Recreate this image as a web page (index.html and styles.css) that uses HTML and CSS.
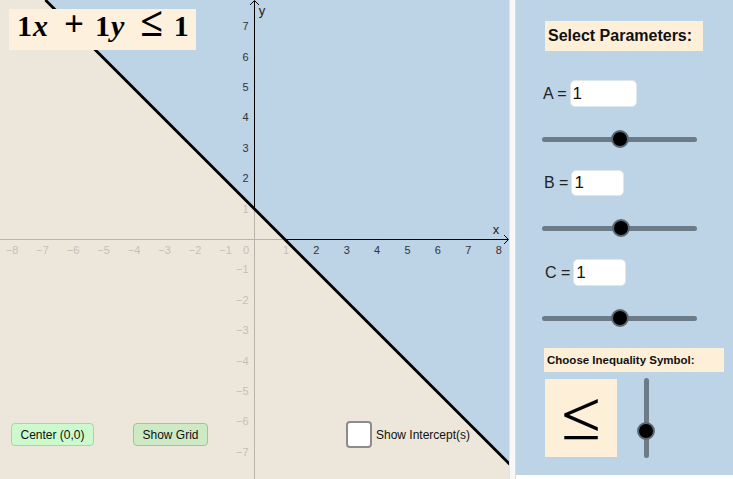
FILE: index.html
```html
<!DOCTYPE html>
<html>
<head>
<meta charset="utf-8">
<link rel="stylesheet" href="styles.css">
</head>
<body>
<div class="app">
  <div class="graph">
    <svg class="plot" width="509" height="479" viewBox="0 0 509 479" xmlns="http://www.w3.org/2000/svg">
      <polygon points="45.4,0 509,0 509,463.6" fill="#bcd4e6"/>
      <polygon class="beige" points="0,0 45.4,0 509,463.6 509,479 0,479"/>
      <g stroke="#000" stroke-width="1" fill="none">
        <line x1="0" y1="239.5" x2="508" y2="239.5"/>
        <line x1="254.5" y1="1" x2="254.5" y2="479"/>
        <polyline points="504,235 508.5,239.5 504,244"/>
        <polyline points="250,5 254.5,0.5 259,5"/>
      </g>
      <g class="lbl">
        <text x="12" y="254" text-anchor="middle">−8</text>
        <text x="42.5" y="254" text-anchor="middle">−7</text>
        <text x="73" y="254" text-anchor="middle">−6</text>
        <text x="103.5" y="254" text-anchor="middle">−5</text>
        <text x="134" y="254" text-anchor="middle">−4</text>
        <text x="164.5" y="254" text-anchor="middle">−3</text>
        <text x="195" y="254" text-anchor="middle">−2</text>
        <text x="225.5" y="254" text-anchor="middle">−1</text>
        <text x="246" y="254" text-anchor="middle">0</text>
        <text x="286" y="254" text-anchor="middle">1</text>
        <text x="316.3" y="254" text-anchor="middle">2</text>
        <text x="346.7" y="254" text-anchor="middle">3</text>
        <text x="377" y="254" text-anchor="middle">4</text>
        <text x="407.5" y="254" text-anchor="middle">5</text>
        <text x="437.9" y="254" text-anchor="middle">6</text>
        <text x="468.3" y="254" text-anchor="middle">7</text>
        <text x="498.7" y="254" text-anchor="middle">8</text>
        <text x="248.5" y="30.2" text-anchor="end">7</text>
        <text x="248.5" y="60.6" text-anchor="end">6</text>
        <text x="248.5" y="91" text-anchor="end">5</text>
        <text x="248.5" y="121.4" text-anchor="end">4</text>
        <text x="248.5" y="151.8" text-anchor="end">3</text>
        <text x="248.5" y="182.2" text-anchor="end">2</text>
        <text x="248.5" y="212.6" text-anchor="end">1</text>
        <text x="248.5" y="273.4" text-anchor="end">−1</text>
        <text x="248.5" y="303.8" text-anchor="end">−2</text>
        <text x="248.5" y="334.2" text-anchor="end">−3</text>
        <text x="248.5" y="364.6" text-anchor="end">−4</text>
        <text x="248.5" y="395" text-anchor="end">−5</text>
        <text x="248.5" y="425.4" text-anchor="end">−6</text>
        <text x="248.5" y="455.8" text-anchor="end">−7</text>
        <text class="axname" x="262" y="15" text-anchor="middle">y</text>
        <text class="axname" x="496" y="234" text-anchor="middle">x</text>
      </g>
      <polygon class="beige veil" points="0,0 45.4,0 509,463.6 509,479 0,479"/>
      <line x1="45.4" y1="0" x2="524.4" y2="479" stroke="#000" stroke-width="2.8"/>
    </svg>

    <div class="formula"><span class="num">1</span><span class="var">x</span><span class="op">+</span><span class="num n2">1</span><span class="var">y</span><span class="rel">≤</span><span class="num n3">1</span></div>

    <div class="controls">
      <button class="btn btn-center">Center (0,0)</button>
      <button class="btn btn-grid">Show Grid</button>
      <label class="check"><span class="box"></span><span class="check-text">Show Intercept(s)</span></label>
    </div>
  </div>

  <div class="divider"></div>

  <div class="panel">
    <div class="title">Select Parameters:</div>

    <div class="param param-a"><span class="plabel">A =</span><input class="field field-a" type="text" value="1"></div>
    <div class="hslider"><span class="knob" style="left:78px"></span></div>

    <div class="param param-b"><span class="plabel">B =</span><input class="field field-b" type="text" value="1"></div>
    <div class="hslider"><span class="knob" style="left:79px"></span></div>

    <div class="param param-c"><span class="plabel">C =</span><input class="field field-c" type="text" value="1"></div>
    <div class="hslider"><span class="knob" style="left:78px"></span></div>

    <div class="choose">Choose Inequality Symbol:</div>

    <div class="symbol-row">
      <div class="symbol"><span class="symbol-glyph">≤</span></div>
      <div class="vslider"><span class="vknob" style="top:44px"></span></div>
    </div>
  </div>
</div>
</body>
</html>
```

FILE: styles.css
```css
* { box-sizing: border-box; }
html, body { margin: 0; padding: 0; background: #fff; }
body { font-family: "Liberation Sans", Arial, sans-serif; color: #111; }

.app {
  display: flex;
  width: 733px;
  height: 479px;
  overflow: hidden;
}

.graph {
  position: relative;
  width: 509px;
  height: 479px;
  flex: none;
}
.plot { display: block; }
.beige { fill: #ede6da; }
.veil { fill-opacity: 0.78; }
.lbl text {
  font-family: "Liberation Sans", Arial, sans-serif;
  font-size: 11px;
  fill: #333;
}
.lbl .axname { font-size: 13px; fill: #222; }

.formula {
  position: absolute;
  left: 9px;
  top: 9px;
  width: 187px;
  height: 41px;
  background: #fdf0dc;
  padding-left: 8px;
  white-space: nowrap;
  font-family: "Liberation Serif", "Times New Roman", serif;
  font-weight: bold;
  font-size: 30px;
  line-height: 34px;
  color: #000;
}
.formula .var { font-style: italic; margin-left: 1px; }
.formula .op { margin-left: 16px; font-size: 35px; line-height: 0; }
.formula .n2 { margin-left: 11px; }
.formula .rel { margin-left: 16px; font-size: 41px; line-height: 0; }
.formula .n3 { margin-left: 11px; }

.controls {
  position: absolute;
  left: 11px;
  top: 421px;
  display: flex;
  align-items: center;
}
.btn {
  font-family: "Liberation Sans", Arial, sans-serif;
  font-size: 12px;
  color: #111;
  height: 23px;
  border-radius: 4px;
  padding: 0;
  margin: 0;
}
.btn-center {
  width: 83px;
  background: #ccfacc;
  border: 1px solid #a6d6a4;
}
.btn-grid {
  width: 75px;
  margin-left: 39px;
  background: #cdeac5;
  border: 1px solid #9fc499;
}
.check {
  display: flex;
  align-items: center;
  margin-left: 138px;
  font-size: 12px;
  color: #111;
}
.box {
  width: 26px;
  height: 27px;
  background: #fff;
  border: 2px solid #8c8c8c;
  border-radius: 4px;
}
.check-text { margin-left: 4px; }

.divider {
  width: 7px;
  flex: none;
  background: #f8f8f8;
  border-left: 1px solid #e3e3e3;
  border-right: 1px solid #dadada;
}

.panel {
  width: 217px;
  height: 475px;
  flex: none;
  background: #bcd4e6;
  display: flex;
  flex-direction: column;
  align-items: flex-start;
  padding-left: 26px;
}

.title {
  margin: 21px 0 0 3px;
  width: 158px;
  height: 30px;
  background: #feefd9;
  font-weight: bold;
  font-size: 16px;
  display: flex;
  align-items: center;
  padding-left: 3px;
  color: #111;
}

.param {
  display: flex;
  align-items: center;
  height: 27px;
  padding-left: 1px;
  font-size: 16px;
  color: #222;
}
.param-a { margin-top: 29px; }
.param-b { margin-top: 22px; height: 26px; padding-left: 2px; }
.param-c { margin-top: 22px; padding-left: 3px; }
.field {
  margin-left: 3px;
  height: 100%;
  background: #fff;
  border: 1px solid #dfe6ec;
  border-radius: 5px;
  font-family: "Liberation Sans", Arial, sans-serif;
  font-size: 17px;
  color: #111;
  padding: 0 0 0 2px;
  outline: none;
}
.field-a { width: 67px; }
.field-b { width: 53px; }
.field-c { width: 53px; }

.hslider {
  position: relative;
  width: 155px;
  height: 18px;
  margin-top: 23px;
}
.hslider::before {
  content: "";
  position: absolute;
  left: 0;
  right: 0;
  top: 6.5px;
  height: 5px;
  border-radius: 3px;
  background: #6c7b88;
}
.knob, .vknob {
  position: absolute;
  width: 18px;
  height: 18px;
  border-radius: 50%;
  background: #000;
  border: 2px solid #5c6873;
}
.knob { top: 0; transform: translateX(-50%); }

.choose {
  margin: 21px 0 0 2px;
  width: 180px;
  height: 24px;
  background: #feefd9;
  font-weight: bold;
  font-size: 11.5px;
  display: flex;
  align-items: center;
  padding-left: 3px;
  color: #111;
}

.symbol-row {
  display: flex;
  margin: 7px 0 0 3px;
}
.symbol {
  width: 72px;
  height: 78px;
  background: #feefd9;
  display: flex;
  align-items: center;
  justify-content: center;
  padding-bottom: 8px;
}
.symbol-glyph {
  display: block;
  font-family: "Inter", "DejaVu Sans", sans-serif;
  font-weight: 200;
  font-size: 80px;
  line-height: 60px;
  color: #000;
}
.vslider {
  position: relative;
  width: 18px;
  height: 80px;
  margin: -1px 0 0 20px;
}
.vslider::before {
  content: "";
  position: absolute;
  top: 0;
  bottom: 0;
  left: 6.5px;
  width: 5px;
  border-radius: 3px;
  background: #6c7b88;
}
.vknob { left: 0; }
```
